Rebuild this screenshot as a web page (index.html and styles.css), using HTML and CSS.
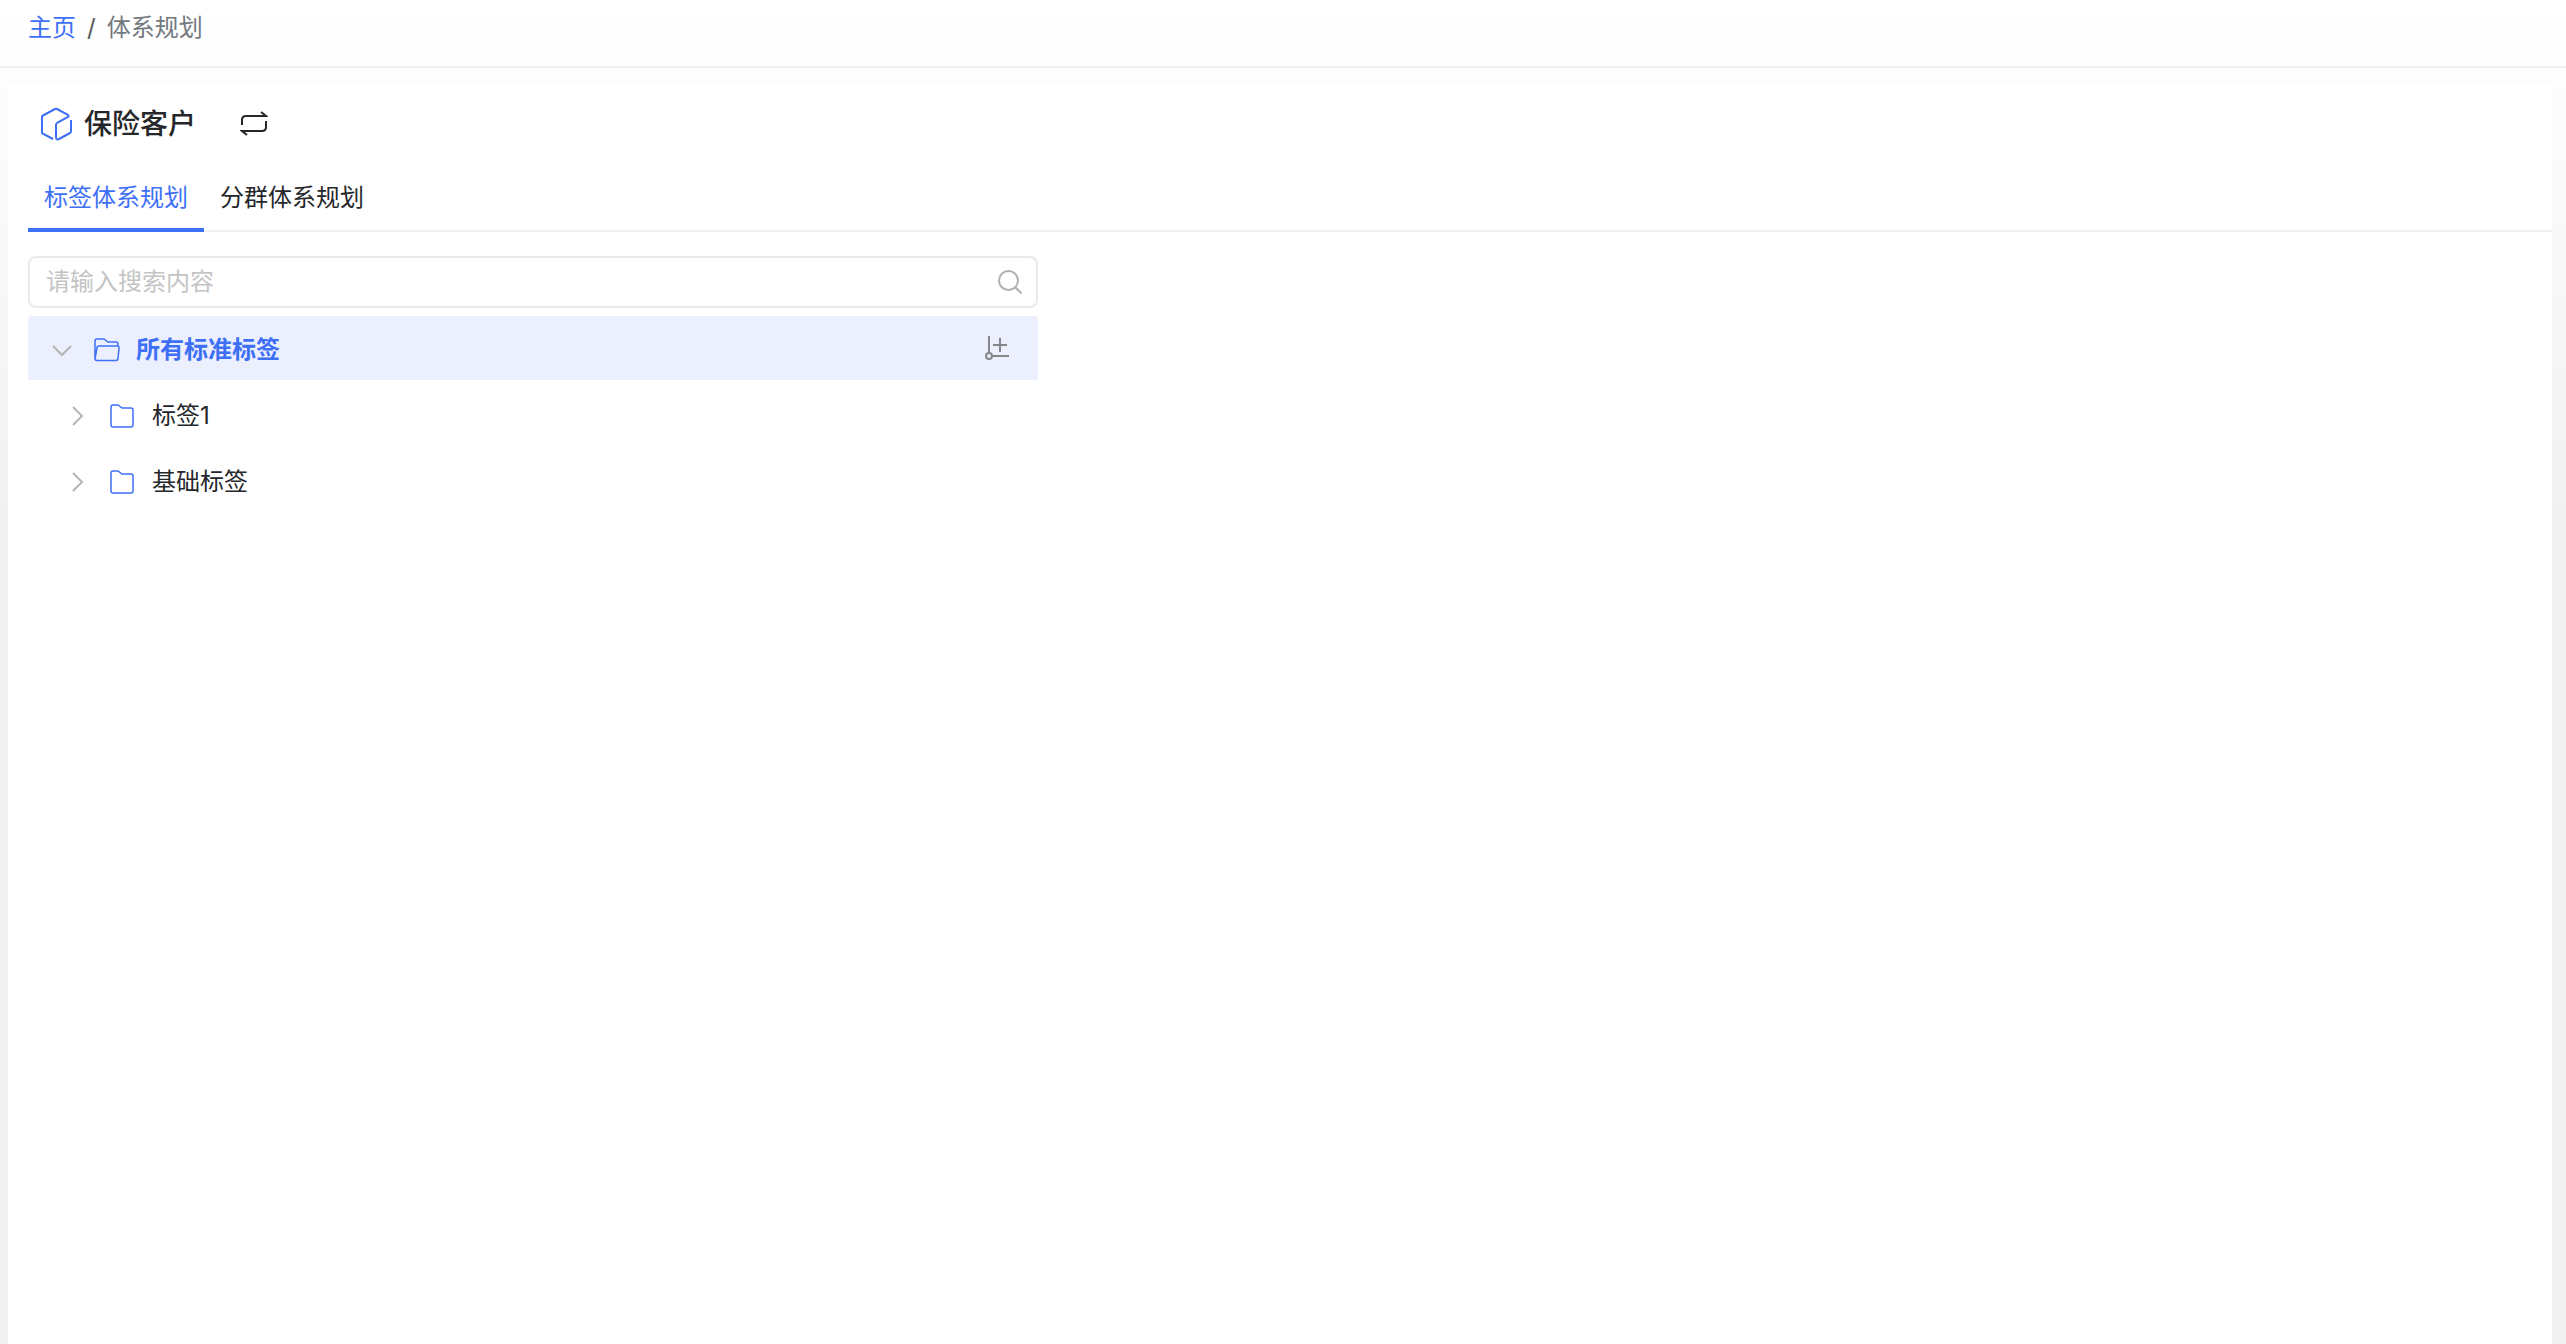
FILE: index.html
```html
<!DOCTYPE html>
<html lang="zh-CN">
<head>
  <meta charset="UTF-8">
  <meta name="viewport" content="width=device-width, initial-scale=1.0">
  <title>体系规划</title>
  <link rel="stylesheet" href="styles.css">
</head>
<body>
  <nav class="breadcrumb">
    <a href="#">主页</a>
    <span class="separator">/</span>
    <span class="current">体系规划</span>
  </nav>

  <main class="card">
    <div class="card-header">
      <svg class="cube-icon" width="32" height="34" viewBox="0 0 32 34">
        <path d="M13 32 L2.5 26.5 Q2 26 2 25.5 V10 Q2 9 3 8.5 L15 2 Q16 1.5 17 2 L27.5 7.5 Q29.5 9 28 10 L17.500 15.500 Q16 16.500 16 18 V30 Q16 33.500 19 32 L30 26 Q31 25.500 31 24 V13" />
      </svg>
      <h1>保险客户</h1>
      <button class="icon-btn" aria-label="切换">
        <svg width="28" height="26" viewBox="0 0 28 26">
          <path d="M2 14 V9 Q2 5 6 5 H26 L21 1 M26 10 V16 Q26 20 22 20 H2 L7 24" />
        </svg>
      </button>
    </div>

    <div class="tabs">
      <button class="tab active">标签体系规划</button>
      <button class="tab">分群体系规划</button>
    </div>

    <section class="tree-panel">
      <div class="search-box">
        <input type="text" id="search" aria-label="搜索" placeholder="请输入搜索内容">
        <button class="search-btn" aria-label="搜索">
          <svg width="24" height="24" viewBox="0 0 24 24">
            <circle cx="10.500" cy="10.500" r="9.500" />
            <path d="M17 17 L23.500 23.500" />
          </svg>
        </button>
      </div>

      <ul class="tree">
        <li class="tree-row root">
          <button class="toggle" aria-label="收起">
            <svg width="20" height="20" viewBox="0 0 20 20"><path d="M1 6 L10 15 L19 6" /></svg>
          </button>
          <svg class="folder-icon" width="26" height="24" viewBox="0 0 26 24">
            <path d="M1 21 V3 Q1 1 3 1 H10 L14 4 H22 Q24 4 24 6 V8 M1 21 L3 10 Q3 8 5 8 H23 Q25.500 8 25 10.500 L24 20 Q24 22.500 22 22.500 H3 Q1 22.500 1 20" />
          </svg>
          <span class="label">所有标准标签</span>
          <button class="add-btn" aria-label="新增">
            <svg width="26" height="26" viewBox="0 0 26 26">
              <path d="M5 1 V17 M9 21 H25 M9 10 H23 M16 3 V17" />
              <circle cx="5" cy="21" r="3" />
            </svg>
          </button>
        </li>
        <li class="tree-row child">
          <button class="toggle" aria-label="展开">
            <svg width="20" height="20" viewBox="0 0 20 20"><path d="M5 1 L14 10 L5 19" /></svg>
          </button>
          <svg class="folder-icon" width="24" height="24" viewBox="0 0 24 24">
            <path d="M1 21 V3 Q1 1 3 1 H8 L12 4 H21 Q23 4 23 6 V21 Q23 23 21 23 H3 Q1 23 1 21 Z" />
          </svg>
          <span class="label">标签1</span>
        </li>
        <li class="tree-row child">
          <button class="toggle" aria-label="展开">
            <svg width="20" height="20" viewBox="0 0 20 20"><path d="M5 1 L14 10 L5 19" /></svg>
          </button>
          <svg class="folder-icon" width="24" height="24" viewBox="0 0 24 24">
            <path d="M1 21 V3 Q1 1 3 1 H8 L12 4 H21 Q23 4 23 6 V21 Q23 23 21 23 H3 Q1 23 1 21 Z" />
          </svg>
          <span class="label">基础标签</span>
        </li>
      </ul>
    </section>
  </main>
</body>
</html>
```
FILE: styles.css
```css
* {
  margin: 0;
  padding: 0;
  box-sizing: border-box;
}

body {
  display: flex;
  flex-direction: column;
  min-height: 100vh;
  font-family: Inter, "Noto Sans CJK SC", sans-serif;
  font-size: 24px;
  line-height: 36px;
  color: #26272b;
  background: #f0f0f0 linear-gradient(#ffffff, #f0f0f0) no-repeat;
  background-size: 100% 560px;
}

button {
  font: inherit;
  color: inherit;
  background: none;
  border: none;
  cursor: pointer;
}

svg {
  display: block;
  fill: none;
  stroke: currentColor;
  stroke-width: 2;
}

/* Breadcrumb */
.breadcrumb {
  display: flex;
  gap: 11px;
  padding: 10px 28px 20px;
  border-bottom: 2px solid #f1f1f1;
}

.breadcrumb a {
  color: #3e70f7;
  text-decoration: none;
}

.separator {
  color: #55585c;
}

.current {
  color: #73787e;
}

/* Card */
.card {
  flex: 1;
  margin: 16px 14px 0 8px;
  padding-left: 20px;
  background: #ffffff;
  border-radius: 8px 8px 0 0;
}

.card-header {
  display: flex;
  align-items: center;
  padding: 20px 12px;
}

.cube-icon {
  color: #3e70f7;
}

h1 {
  margin: 0 44px 0 12px;
  font-size: 28px;
  font-weight: 500;
  line-height: 40px;
}

/* Tabs */
.tabs {
  display: flex;
  border-bottom: 2px solid #f0f0f0;
}

.tab {
  height: 68px;
  margin-bottom: -2px;
  padding: 4px 16px 0;
  border-bottom: 4px solid transparent;
}

.tab.active {
  color: #3e70f7;
  border-color: #3e70f7;
}

/* Search and tag tree */
.tree-panel {
  width: 40%;
  padding-top: 24px;
}

.search-box {
  display: flex;
  align-items: center;
  height: 52px;
  margin-bottom: 8px;
  padding: 0 14px 0 16px;
  border: 2px solid #e9e9e9;
  border-radius: 8px;
}

.search-box input {
  flex: 1;
  font: inherit;
  color: inherit;
  background: none;
  border: none;
  outline: none;
}

.search-box input::placeholder {
  color: #c4c4c4;
}

.search-btn {
  color: #b0b0b3;
}

.tree {
  display: flex;
  flex-direction: column;
  gap: 2px;
  list-style: none;
}

.tree-row {
  display: flex;
  align-items: center;
  height: 64px;
  padding: 4px 28px 0 24px;
}

.tree-row.child {
  padding-left: 40px;
}

.root {
  color: #3e70f7;
  font-weight: 700;
  background: #ebeffe;
  border-radius: 4px 4px 0 0;
}

.toggle {
  margin-right: 22px;
  color: #b5b5b5;
}

.folder-icon {
  color: #3e70f7;
  stroke-width: 1.5;
}

.label {
  flex: 1;
  margin-left: 18px;
}

.root .label {
  margin-left: 16px;
}

.add-btn {
  padding-bottom: 4px;
  color: #85868a;
}
```
